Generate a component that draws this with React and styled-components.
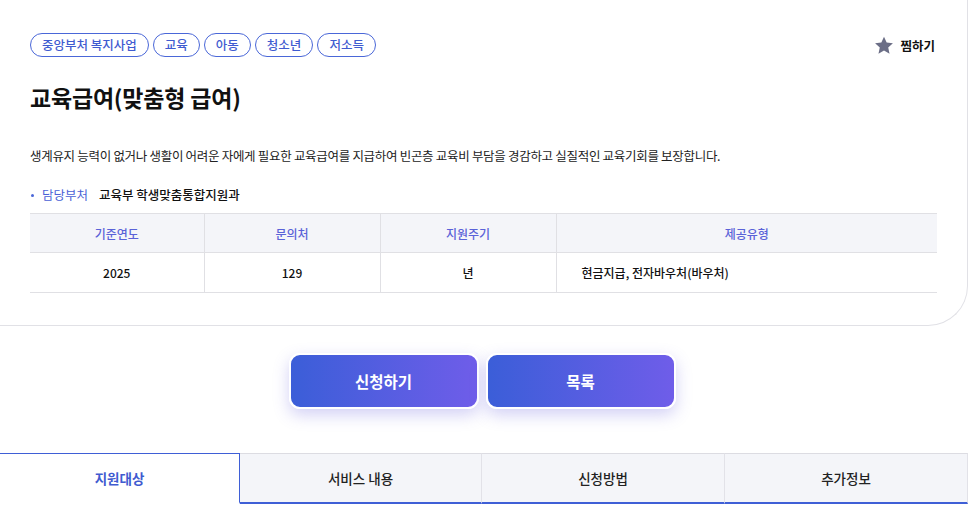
import React from "react";
import styled, { createGlobalStyle } from "styled-components";

const GlobalStyle = createGlobalStyle`
  body {
    margin: 0;
    background: #fff;
    font-family: "Noto Sans CJK KR", "Noto Sans", sans-serif;
    color: #111;
  }
`;

const Page = styled.div`
  width: 968px;
`;

const Card = styled.section`
  border-right: 1px solid #e1e1e6;
  border-bottom: 1px solid #e1e1e6;
  border-bottom-right-radius: 40px;
  padding: 33px 30px 32px 30px;
`;

const TopRow = styled.div`
  display: flex;
  justify-content: space-between;
  align-items: center;
`;

const Tags = styled.div`
  display: flex;
  gap: 4px;
`;

const Tag = styled.span`
  display: inline-flex;
  align-items: center;
  height: 22px;
  padding: 0 11px;
  border: 1px solid #4a67d8;
  border-radius: 12px;
  font-size: 12.5px;
  font-weight: 500;
  line-height: 1;
  color: #3f5bd0;
`;

const Like = styled.button`
  display: flex;
  align-items: center;
  gap: 6px;
  border: 0;
  background: none;
  padding: 0 2px 0 0;
  font-family: inherit;
  font-size: 12.5px;
  font-weight: 700;
  color: #111;
  cursor: pointer;
`;

const Title = styled.h1`
  margin: 24px 0 0;
  font-size: 23px;
  line-height: 32px;
  font-weight: 700;
  letter-spacing: -0.2px;
`;

const Desc = styled.p`
  margin: 33px 0 0;
  font-size: 12.5px;
  line-height: 20px;
  color: #222;
  letter-spacing: -0.3px;
`;

const Dept = styled.div`
  display: flex;
  align-items: center;
  margin-top: 19px;
  font-size: 12.5px;
  line-height: 20px;
`;

const Bullet = styled.span`
  width: 3px;
  height: 3px;
  border-radius: 50%;
  background: #4a67d8;
  margin: 0 8px 0 1px;
`;

const DeptLabel = styled.span`
  color: #4a5fd6;
  margin-right: 11px;
`;

const DeptValue = styled.span`
  color: #111;
  font-weight: 500;
`;

const Table = styled.table`
  width: 100%;
  margin-top: 8px;
  border-collapse: collapse;
  border-top: 1px solid #e0e0e4;
  table-layout: fixed;
  font-size: 12px;
`;

const Th = styled.th`
  height: 38px;
  padding: 0;
  background: #f4f5f9;
  color: #5a62d8;
  font-weight: 500;
  border-bottom: 1px solid #e0e0e4;
  border-left: ${(p) => (p.$first ? "0" : "1px solid #e0e0e4")};
`;

const Td = styled.td`
  height: 39px;
  padding: ${(p) => (p.$left ? "0 0 0 25px" : "0")};
  text-align: ${(p) => (p.$left ? "left" : "center")};
  font-weight: 500;
  color: #111;
  border-bottom: 1px solid #e0e0e4;
  border-left: ${(p) => (p.$first ? "0" : "1px solid #e0e0e4")};
`;

const Actions = styled.div`
  display: flex;
  justify-content: center;
  gap: 7px;
  margin-top: 27px;
  padding-right: 4px;
`;

const ActionButton = styled.button`
  width: 190px;
  height: 56px;
  border: 2px solid #fff;
  border-radius: 11px;
  background: linear-gradient(90deg, #3b5ed8 0%, #6f5de9 100%);
  box-shadow: 0 6px 16px rgba(96, 88, 220, 0.28);
  color: #fff;
  font-family: inherit;
  font-size: 15.5px;
  font-weight: 700;
  cursor: pointer;
`;

const Tabs = styled.nav`
  display: grid;
  grid-template-columns: 240px 242px 243px 243px;
  margin-top: 44px;
`;

const TabItem = styled.button`
  height: 51px;
  padding: 0;
  font-family: inherit;
  font-size: 13.5px;
  font-weight: ${(p) => (p.$active ? 700 : 500)};
  color: ${(p) => (p.$active ? "#3f5bd0" : "#222")};
  background: ${(p) => (p.$active ? "#fff" : "#f4f5f9")};
  border: 0;
  border-top: 1px solid ${(p) => (p.$active ? "#3f5fd6" : "#dcdce2")};
  border-right: 1px solid ${(p) => (p.$active ? "#3f5fd6" : "#e2e2e8")};
  border-bottom: ${(p) => (p.$active ? "2px solid transparent" : "2px solid #3f5fd6")};
  cursor: pointer;
`;

const Star = () => (
  <svg width="20" height="19" viewBox="0 0 24 23">
    <path
      d="M12 1l3.2 7 7.6.8-5.7 5.1 1.6 7.5L12 17.6l-6.7 3.8 1.6-7.5L1.2 8.8l7.6-.8z"
      fill="#6b6e86"
    />
  </svg>
);

const tags = ["중앙부처 복지사업", "교육", "아동", "청소년", "저소득"];
const tabs = ["지원대상", "서비스 내용", "신청방법", "추가정보"];

export default function App() {
  return (
    <Page>
      <GlobalStyle />
      <Card>
        <TopRow>
          <Tags>
            {tags.map((t) => (
              <Tag key={t}>{t}</Tag>
            ))}
          </Tags>
          <Like>
            <Star />
            찜하기
          </Like>
        </TopRow>
        <Title>교육급여(맞춤형 급여)</Title>
        <Desc>
          생계유지 능력이 없거나 생활이 어려운 자에게 필요한 교육급여를 지급하여 빈곤층 교육비 부담을 경감하고 실질적인 교육기회를 보장합니다.
        </Desc>
        <Dept>
          <Bullet />
          <DeptLabel>담당부처</DeptLabel>
          <DeptValue>교육부 학생맞춤통합지원과</DeptValue>
        </Dept>
        <Table>
          <colgroup>
            <col style={{ width: "174px" }} />
            <col style={{ width: "176px" }} />
            <col style={{ width: "176px" }} />
            <col />
          </colgroup>
          <thead>
            <tr>
              <Th $first>기준연도</Th>
              <Th>문의처</Th>
              <Th>지원주기</Th>
              <Th>제공유형</Th>
            </tr>
          </thead>
          <tbody>
            <tr>
              <Td $first>2025</Td>
              <Td>129</Td>
              <Td>년</Td>
              <Td $left>현금지급, 전자바우처(바우처)</Td>
            </tr>
          </tbody>
        </Table>
      </Card>
      <Actions>
        <ActionButton>신청하기</ActionButton>
        <ActionButton>목록</ActionButton>
      </Actions>
      <Tabs>
        {tabs.map((t, i) => (
          <TabItem key={t} $active={i === 0}>
            {t}
          </TabItem>
        ))}
      </Tabs>
    </Page>
  );
}
